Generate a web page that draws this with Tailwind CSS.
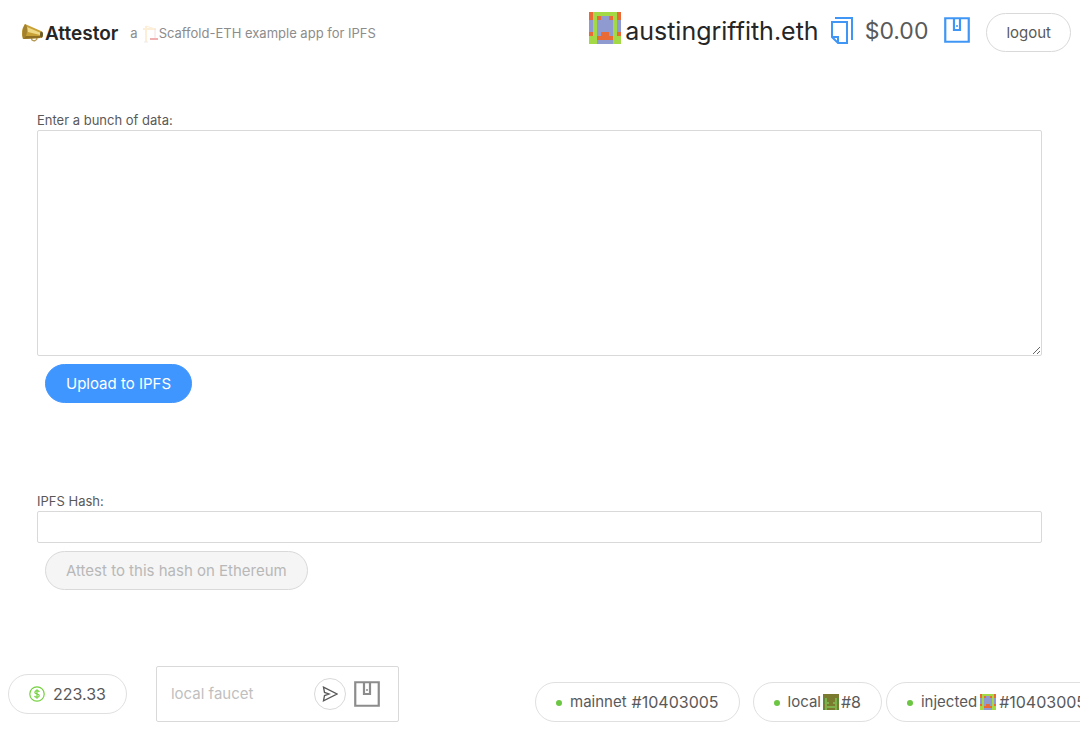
<!DOCTYPE html>
<html lang="en">

<head>
    <meta charset="UTF-8">
    <meta name="viewport" content="width=device-width, initial-scale=1.0">
    <script src="https://cdn.jsdelivr.net/npm/@tailwindcss/browser@4"></script>
    <title>Attestor</title>
</head>

<body class="min-h-screen flex flex-col overflow-x-hidden bg-white font-['Inter','Liberation_Sans',sans-serif] text-[15px] text-[#595959]">

    <!-- Shared icons -->
    <svg class="hidden">
        <symbol id="icon-wallet" viewBox="0 0 26 26">
            <path d="M1.25 1.25h23.5v23.5H1.25zM10 1v12h6V1" fill="none" stroke="currentColor" stroke-width="2.2"/>
            <circle cx="13" cy="9" r="1" fill="currentColor"/>
        </symbol>
        <symbol id="blockie-austin" viewBox="0 0 8 8">
            <g shape-rendering="crispEdges">
                <path fill="#a2d945" d="M0 0h8v8H0z"/>
                <path fill="#8f9bd0" d="M0 2h1v3H0zM7 2h1v3H7zM2 2h4v3H2zM3 1h2v1H3zM2 5h1v1H2zM5 5h1v1H5zM2 7h4v1H2z"/>
                <path fill="#e96a35" d="M0 0h1v2H0zM7 0h1v2H7zM2 1h1v1H2zM5 1h1v1H5zM0 5h1v1H0zM7 5h1v1H7zM3 5h2v1H3zM2 6h4v1H2z"/>
            </g>
        </symbol>
        <symbol id="blockie-local" viewBox="0 0 8 8">
            <g shape-rendering="crispEdges">
                <path fill="#7b7b30" d="M0 0h8v8H0z"/>
                <path fill="#5d8a38" d="M0 2h1v3H0zM7 2h1v3H7zM0 7h1v1H0zM7 7h1v1H7z"/>
                <path fill="#80b04c" d="M1 2h1v2H1zM6 2h1v2H6zM1 4h2v1H1zM5 4h2v1H5zM1 5h1v3H1zM6 5h1v3H6zM2 6h4v1H2z"/>
            </g>
        </symbol>
    </svg>

    <header class="flex items-start justify-between pl-5 pr-[9px] pt-3">
        <div class="flex items-center pt-2">
            <svg class="w-6 h-6" viewBox="0 0 24 24">
                <path d="M11 15l1 3q3 2 5-1l-1-2" fill="none" stroke="#b59a55" stroke-width="1.3"/>
                <path d="M5 2L21 9q3 3 1 7L3 17Q0 9 5 2z" fill="#c8a136"/>
                <path d="M7 5l14 6-1 2L8 10z" fill="#efd985"/>
                <path d="M5 14l16 0-1 2-17 1z" fill="#8f6f22"/>
                <path d="M5 2Q1 9 3 17q3-1 4-7T5 2z" fill="#a3822f"/>
                <ellipse cx="21.5" cy="12.5" rx="1.5" ry="3" fill="#6b5a2c"/>
            </svg>
            <h1 class="ml-px text-[19px] leading-7 font-semibold text-[#262626]">Attestor</h1>
            <p class="ml-3 flex items-center text-[13px] text-[#8c8c8c]">
                <span>a</span>
                <svg class="ml-1 w-[17px] h-[18px]" viewBox="0 0 17 18">
                    <path d="M4 1v16M1 4h13" stroke="#fdeed8" stroke-width="2"/>
                    <path d="M4 1l9 3" stroke="#fdeed8"/>
                    <path d="M13 4v9" stroke="#f6e0e0"/>
                    <path d="M8 14h8" stroke="#efb1b1" stroke-width="2"/>
                    <path d="M2 17h4" stroke="#ececec"/>
                </svg>
                <a href="#">Scaffold-ETH example app for IPFS</a>
            </p>
        </div>
        <div class="flex items-start">
            <svg class="w-8 h-8"><use href="#blockie-austin"/></svg>
            <a href="#" class="ml-1 text-[25px] leading-[38px] text-[#262626]">austingriffith.eth</a>
            <button class="ml-3 mt-1 text-[#4096f5]" aria-label="Copy address">
                <svg class="w-[22px] h-7" viewBox="0 0 22 28" fill="none" stroke="currentColor" stroke-width="2">
                    <path d="M4 2h17v22"/>
                    <path d="M1 6h15v21H7l-6-6zM1 21h6v6"/>
                </svg>
            </button>
            <span class="ml-3 text-[23px] leading-[38px]">$0.00</span>
            <button class="ml-4 mt-[5px] text-[#4096f5]" aria-label="Wallet">
                <svg class="w-[26px] h-[26px]"><use href="#icon-wallet"/></svg>
            </button>
            <button class="ml-4 mt-px h-[39px] px-[19px] pt-0.5 rounded-full border border-[#d9d9d9]">logout</button>
        </div>
    </header>

    <main class="pl-[37px] pr-[38px] pt-[58px] text-[13px]">
        <label for="data" class="block leading-5">Enter a bunch of data:</label>
        <textarea id="data" class="block w-full h-[226px] p-2 border border-[#d9d9d9] rounded-xs resize"></textarea>
        <button class="block ml-2 mt-2 h-[39px] px-5 pt-0.5 rounded-full border border-[#4096ff] bg-[#4096ff] text-[15px] text-white">Upload to IPFS</button>

        <label for="hash" class="block mt-[88px] leading-5">IPFS Hash:</label>
        <input id="hash" type="text" class="block w-full h-8 px-2 border border-[#d9d9d9] rounded-xs">
        <button disabled class="block ml-2 mt-2 h-[39px] px-5 pt-0.5 rounded-full border border-[#d9d9d9] bg-[#f5f5f5] text-[15px] text-[#b8b8b8]">Attest to this hash on Ethereum</button>
    </main>

    <footer class="mt-auto flex items-end justify-between pl-2 pb-[27px] whitespace-nowrap">
        <div class="flex items-center">
            <button class="flex items-center gap-2 h-10 px-5 rounded-full border border-[#e0e0e0] text-base">
                <svg class="w-4 h-4" viewBox="0 0 16 16" fill="none" stroke="#73d13d" stroke-width="1.2">
                    <circle cx="8" cy="8" r="7.2"/>
                    <path d="M10.3 6q-.3-1.4-2.3-1.4T5.8 6.2Q5.8 7.6 8 8t2.3 1.8Q10.2 11.4 8 11.4T5.6 9.9M8 3.3v9.4"/>
                </svg>
                223.33
            </button>
            <div class="ml-[29px] w-[243px] h-14 flex items-center pl-[14px] pr-[18px] border border-[#d9d9d9] rounded-xs">
                <input type="text" aria-label="local faucet" placeholder="local faucet" class="min-w-0 flex-1 placeholder:text-[#bfbfbf]">
                <button class="w-8 h-8 flex items-center justify-center rounded-full border border-[#d9d9d9]" aria-label="Send">
                    <svg class="w-4 h-4" viewBox="0 0 16 16" fill="none" stroke="currentColor" stroke-width="1.3">
                        <path d="M1.5 1.2L15 8 1.5 14.8l1-5.2L7 8 2.5 6.4z"/>
                    </svg>
                </button>
                <button class="ml-2 text-[#8c8c8c]" aria-label="Wallet">
                    <svg class="w-[26px] h-[26px]"><use href="#icon-wallet"/></svg>
                </button>
            </div>
        </div>
        <div class="flex w-[545px] shrink-0">
            <button class="flex shrink-0 items-center h-10 px-5 rounded-full border border-[#e0e0e0]">
                <span class="mt-px mr-2 w-[6px] h-[6px] rounded-full bg-[#6cc644]"></span>mainnet
                <span class="ml-[5px] text-base">#10403005</span>
            </button>
            <button class="ml-[13px] flex shrink-0 items-center h-10 px-5 rounded-full border border-[#e0e0e0]">
                <span class="mt-px mr-2 w-[6px] h-[6px] rounded-full bg-[#6cc644]"></span>local
                <svg class="mx-[2px] w-4 h-4"><use href="#blockie-local"/></svg>
                <span class="text-base">#8</span>
            </button>
            <button class="ml-1 flex shrink-0 items-center h-10 px-5 rounded-full border border-[#e0e0e0]">
                <span class="mt-px mr-2 w-[6px] h-[6px] rounded-full bg-[#6cc644]"></span>injected
                <svg class="mx-[3px] w-4 h-4"><use href="#blockie-austin"/></svg>
                <span class="text-base">#10403005</span>
            </button>
        </div>
    </footer>

</body>

</html>
